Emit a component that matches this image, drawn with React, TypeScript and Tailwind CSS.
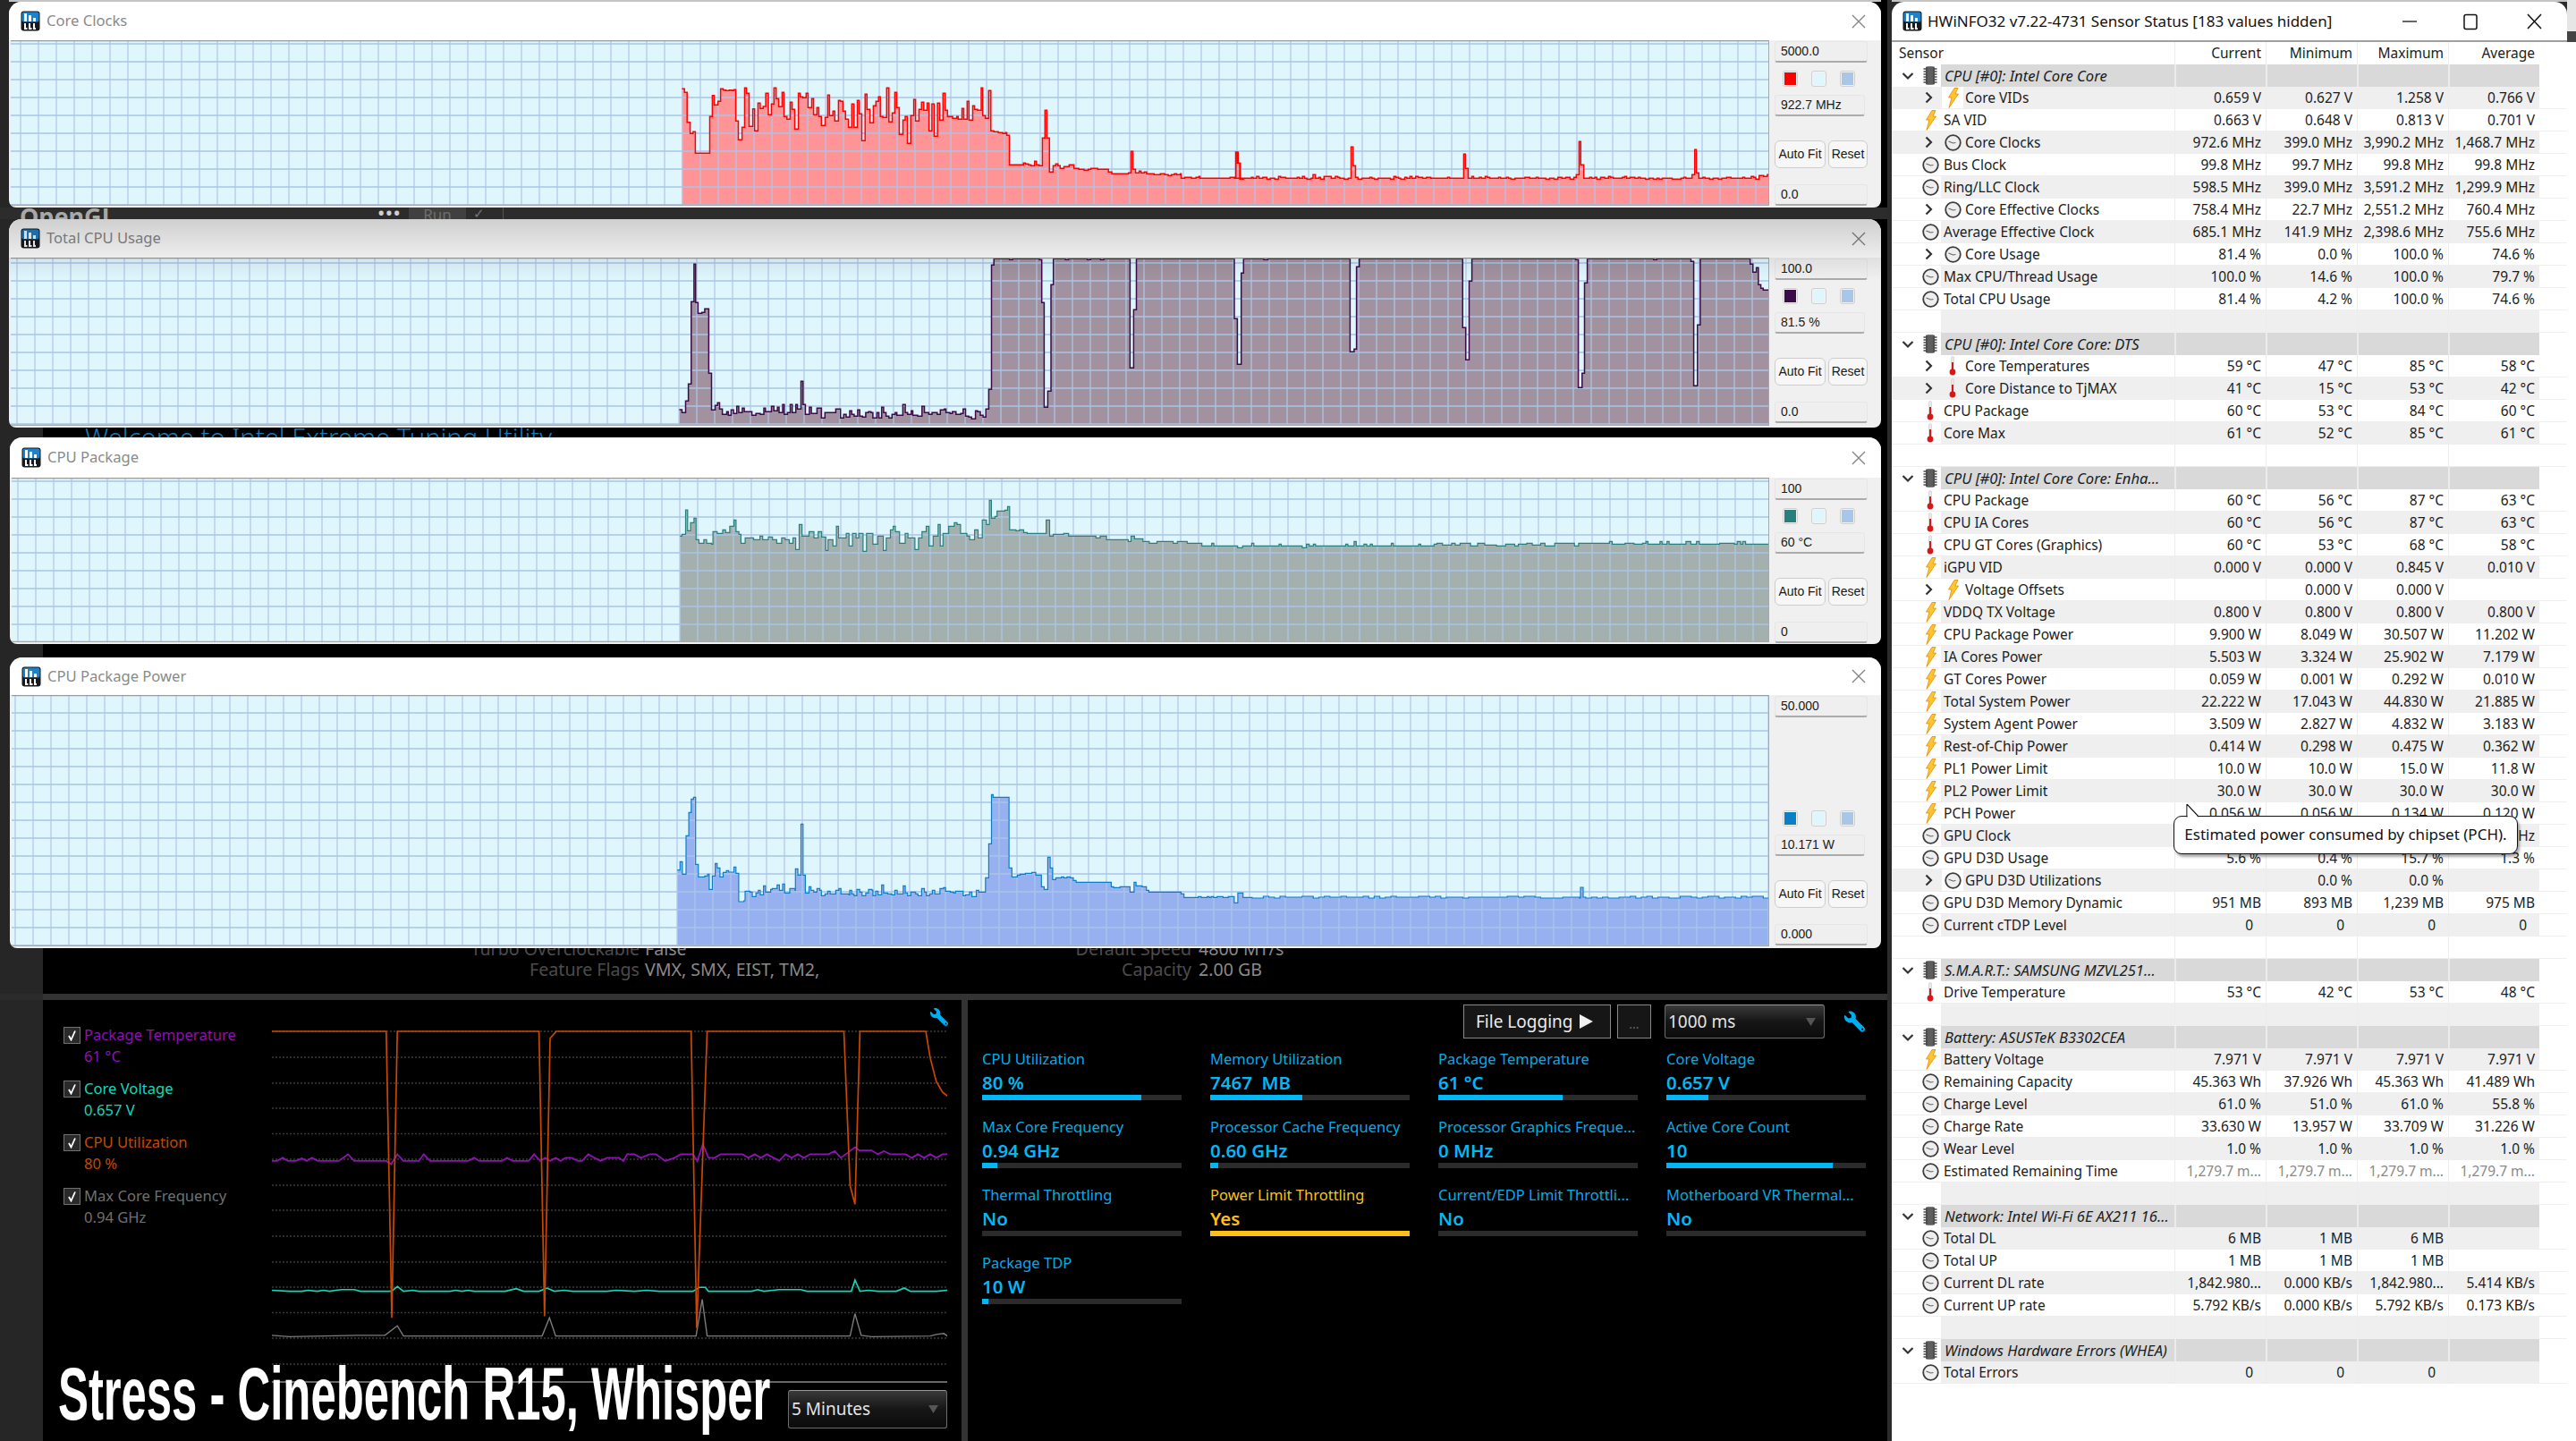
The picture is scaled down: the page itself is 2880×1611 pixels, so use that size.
import React from "react";
import { FaWrench } from "react-icons/fa";

type P = [number, number];
const conv = (raw: number[], x0: number, y0: number, sx: number, sy = 3): P[] => {
  const o: P[] = [];
  for (let i = 0; i < raw.length; i += 2) o.push([x0 + raw[i] / sx, y0 + raw[i + 1] / sy]);
  return o;
};
const stepD = (p: P[], right: number) => {
  let d = `M${p[0][0].toFixed(1)} ${p[0][1].toFixed(1)}`;
  for (let i = 1; i < p.length; i++) d += `H${p[i][0].toFixed(1)}V${p[i][1].toFixed(1)}`;
  return d + `H${right}`;
};
const noisy = (x0: number, x1: number, base: number, seed: number): P[] => {
  const o: P[] = [];
  let s = seed;
  for (let x = x0; x < x1; x += 6.2) {
    s = (s * 9301 + 49297) % 233280;
    const r = s / 233280;
    o.push([x, base + (r < 0.25 ? -1 : r > 0.8 ? 1 : 0)]);
  }
  return o;
};

const clk1 = conv([30,118,37,130,44,230,52,268,60,262,66,334,105,211,112,140,117,172,127,160,134,118,141,122,148,124,158,122,165,124,170,121,175,226,182,289,192,247,199,115,204,133,211,244,221,185,226,259,235,166,241,184,249,177,256,133,263,205,271,169,278,115,284,151,291,178,300,130,305,211,313,220,322,163,327,187,334,253,344,133,349,145,356,148,365,133,370,181,380,151,385,205,394,181,399,211,406,241,416,214,423,139,428,208,437,193,442,226,452,157,457,160,464,193,471,220,479,247,488,169,494,247,503,157,508,202,515,292,524,136,529,187,537,232,546,175,553,160,560,145,565,211,572,214,582,115,588,229,597,199,604,130,609,181,616,271,626,223,632,211,638,301,647,208,655,154,660,226,669,187,676,163,682,190,691,166,696,259,704,169,710,277,719,166,725,223,734,133,740,190,746,211,760,217,771,211,775,220,785,184,790,220,799,160,804,223,814,175,819,187,827,190,837,115,841,208,848,217,857,124,863,259,871,262,883,265,895,268,902,265,906,274,913,373,951,367,956,370,964,373,971,376,981,361,986,373,993,376,1002,283,1009,190,1014,283,1021,397,1031,376,1038,370,1044,376,1050,385,1060,379,1074,373,1087,385,1100,388,1114,391,1126,388,1133,385,1151,388,1180,397,1189,403,1234,400,1241,328,1246,388,1253,400,1263,394,1268,400,1277,397,1283,403,1303,406,1320,403,1332,406,1341,409,1350,406,1358,403,1364,406,1374,403,1376,418,1386,415,1404,418,1416,415,1424,412,1427,418,1508,415,1524,331,1530,367,1536,421,1545,418], 750, 60, 2.412);
const clk2 = conv([0,205,4,120,9,157,16,211,27,208,50,205,55,208,65,202,72,208,83,205,95,211,105,208,118,211,129,202,135,205,150,208,184,205,190,208,199,202,205,208,212,211,224,208,230,196,237,208,247,205,252,211,262,202,283,208,295,202,302,205,308,208,321,211,333,208,341,103,347,166,354,205,361,211,373,208,396,205,402,208,409,211,420,208,456,211,466,202,472,205,480,208,486,211,498,205,504,208,513,202,519,208,530,202,537,205,550,208,561,205,574,208,623,205,629,208,670,127,675,175,683,208,694,202,699,208,716,205,722,208,733,202,739,205,746,208,772,205,778,208,795,205,801,208,808,211,820,208,849,205,863,208,882,205,888,208,910,211,921,208,934,211,945,205,957,208,968,205,981,211,992,205,999,196,1007,85,1012,163,1021,208,1038,205,1044,208,1053,205,1059,211,1070,205,1082,208,1093,202,1099,205,1107,208,1133,205,1140,202,1146,208,1156,205,1170,208,1180,205,1186,208,1201,211,1212,208,1224,211,1235,208,1241,211,1250,208,1279,211,1305,208,1313,205,1319,208,1337,196,1345,112,1350,190,1357,208,1369,205,1375,208,1388,211,1399,208,1414,211,1424,208,1438,205,1451,208,1485,205,1491,208,1510,202,1517,205,1523,211,1533,199,1546,202,1557,196], 1380, 130, 2.613);
const usage1 = conv([133,594,140,604,149,565,156,508,163,232,170,106,174,235,180,271,190,268,197,256,207,472,214,595,223,580,229,571,234,592,241,610,252,601,256,613,263,595,269,607,277,583,282,604,291,589,296,601,306,601,315,613,325,607,336,610,345,589,349,601,364,583,370,598,379,586,383,604,392,577,396,610,404,604,411,577,416,604,425,577,429,592,438,499,443,577,449,610,459,586,464,607,478,589,489,622,498,604,525,592,537,622,545,610,551,619,560,598,565,610,571,616,580,595,585,616,592,619,600,604,607,601,613,604,618,622,628,604,633,622,640,586,645,604,651,616,658,622,666,610,674,604,678,613,693,577,699,604,705,610,714,598,718,613,730,616,741,583,747,604,758,610,766,604,779,610,787,595,797,592,801,604,811,607,817,601,826,610,838,607,844,592,850,616,858,619,865,625,875,598,880,601,887,613,894,619,901,592,908,526,915,109,921,88,960,91,968,88,1035,91,1041,235,1047,586,1056,532,1064,175,1070,88,1100,91,1108,88,1155,91,1163,88,1188,91,1196,88,1262,454,1271,259,1278,88], 700, 260, 2.24);
const usage2 = conv([0,229,9,382,20,76,27,28,86,31,98,28,338,340,350,331,357,55,365,28,667,259,676,367,686,103,694,28,997,31,1005,460,1016,412,1023,109,1031,28,1225,31,1234,28,1334,37,1342,454,1353,250,1361,28,1507,46,1515,73,1525,58,1531,115,1538,127,1545,133], 1380, 280, 2.613);
const pkg = conv([13,178,16,172,21,90,24,160,28,133,33,118,36,190,40,202,47,190,51,202,58,205,60,163,66,169,74,157,78,166,84,145,90,124,93,163,97,172,100,202,106,184,118,190,127,178,131,190,139,181,145,190,151,202,158,184,163,190,169,202,174,184,178,223,183,139,187,178,197,163,204,184,210,163,215,181,221,226,224,190,231,211,236,145,239,184,250,169,254,211,259,169,264,184,268,169,274,229,279,169,288,205,295,178,303,226,307,184,313,157,317,145,320,163,326,202,334,169,338,184,348,223,353,184,358,163,364,145,368,211,374,178,381,139,384,211,388,169,396,145,404,133,408,139,413,169,422,178,426,190,433,157,438,184,444,124,450,139,454,58,457,118,462,112,465,94,476,91,480,79,483,157,492,160,497,157,503,166,508,169,535,124,540,178,545,172,560,169,567,178,606,184,612,178,621,190,652,196,656,178,661,187,673,196,682,202,693,196,716,202,722,196,736,202,757,211,771,202,774,211,808,217,815,211,828,202,831,211,867,205,870,211,900,217,906,205,910,211,916,205,919,211,962,205,965,211,974,196,977,211,988,205,992,211,997,205,1000,211,1027,202,1030,211,1066,205,1069,211,1088,205,1092,202,1100,208,1113,202,1118,208,1125,202,1140,211,1150,202,1160,208,1177,211,1190,205,1203,211,1208,205,1220,202,1228,208,1240,202,1246,211,1260,202,1288,211,1294,202,1338,196,1342,205,1360,202,1373,205,1385,202,1390,196,1393,205,1410,196,1413,205,1420,196,1423,205,1447,196,1454,205,1462,196,1466,205,1495,202,1516,205,1520,196,1525,205,1528,196,1532,205], 750, 540, 1.275);
const power1 = conv([128,638,135,610,141,652,150,523,157,445,163,400,169,394,174,619,181,661,197,658,204,652,208,703,216,658,223,616,228,631,235,661,243,646,251,640,257,645,270,628,275,649,282,744,295,741,298,709,310,712,316,727,325,715,331,706,336,721,344,691,349,712,362,703,366,700,378,688,384,706,392,685,397,715,410,700,423,706,424,634,430,655,438,484,443,655,449,715,458,694,463,706,470,712,478,700,485,706,489,724,498,718,505,709,511,718,525,706,533,700,538,718,558,721,560,706,565,718,571,724,578,703,585,712,591,724,600,715,607,703,616,706,618,724,625,709,631,721,640,688,645,715,655,718,665,721,673,706,679,718,694,691,699,715,705,724,713,712,725,718,731,724,740,700,747,712,752,724,760,718,767,706,773,718,786,700,795,697,800,709,812,712,820,715,825,709,844,724,850,721,860,712,866,727,877,706,883,712,900,664,908,550,915,385,919,394,959,631,966,661,980,655,987,652,1000,649,1016,646,1026,655,1040,694,1047,703,1056,595,1062,631,1068,670,1076,664,1090,661,1096,664,1104,661,1112,664,1120,673,1127,679,1215,694,1221,697,1237,694,1262,712,1272,679,1277,691,1292,694,1303,706,1309,712,1390,718,1397,730,1433,727,1440,730,1455,727,1460,730,1465,727,1471,730,1480,727,1495,730,1508,727,1523,748,1532,715,1545,730], 700, 760, 2.24);
const power: P[] = [...power1, ...noisy(1400, 1766, 1003, 17), [1767, 992], [1770, 1003], ...noisy(1773, 1978, 1003, 91)];

const mapX = (a: number[]) => conv(a, 0, 1050, 1.452, 2.795);
const toLine = (p: P[]) => p.map((q) => `${q[0].toFixed(1)},${q[1].toFixed(1)}`).join(" ");
const orange = mapX([441,288,627,288,636,1183,645,288,875,288,884,1178,893,310,903,288,1122,288,1131,1215,1148,288,1370,288,1380,770,1388,828,1396,288,1503,288,1510,370,1520,445,1530,478,1538,490]);
const purple = mapX([441,693,450,693,459,683,467,693,480,693,490,685,498,693,506,683,516,693,550,693,565,672,575,693,627,693,635,703,645,672,655,693,680,693,688,672,698,693,760,693,770,683,778,693,815,693,823,683,832,693,858,693,867,672,877,693,885,683,893,693,902,683,910,693,918,683,928,683,938,693,945,693,955,672,965,683,975,693,985,683,1005,683,1012,693,1018,672,1030,672,1040,683,1055,672,1065,672,1080,693,1095,683,1105,672,1125,672,1132,693,1141,640,1150,683,1160,683,1170,672,1205,672,1215,683,1225,672,1235,683,1245,672,1265,693,1275,672,1285,683,1295,672,1305,683,1315,672,1345,672,1355,662,1365,683,1388,650,1395,660,1415,660,1425,672,1435,662,1445,672,1470,672,1480,683,1490,672,1500,683,1510,672,1520,683,1530,672,1538,672]);
const teal = mapX([441,1097,470,1100,490,1100,500,1097,515,1100,525,1097,535,1100,545,1097,555,1095,575,1095,585,1100,636,1100,645,1085,655,1100,670,1097,680,1100,730,1100,740,1097,750,1100,760,1097,770,1100,820,1100,838,1092,850,1100,875,1100,888,1090,900,1100,915,1097,930,1100,985,1100,1000,1097,1030,1100,1050,1097,1070,1100,1125,1100,1135,1088,1145,1088,1150,1100,1220,1100,1230,1095,1240,1100,1255,1097,1265,1095,1300,1095,1310,1100,1370,1100,1382,1100,1388,1065,1396,1100,1410,1097,1425,1100,1455,1100,1468,1090,1478,1100,1520,1100,1538,1097]);
const grayL = mapX([441,1238,470,1242,580,1238,625,1238,645,1208,655,1240,880,1240,892,1183,902,1240,1130,1240,1140,1125,1148,1240,1380,1240,1388,1170,1398,1238,1415,1242,1510,1240,1520,1235,1532,1232,1538,1240]);
const dotted = [1153,1182,1211,1239,1267.5,1296,1325,1353,1382,1411,1439,1467.5,1496,1525];

const AppIcon = () => (
  <svg width="22" height="23" viewBox="0 0 22 23" className="shrink-0">
    <rect x="0.5" y="0.5" width="21" height="22" rx="3" fill="#17191c" />
    <rect x="1.5" y="1.5" width="19" height="11" rx="2" fill="#1d82cb" />
    <rect x="4" y="3" width="3" height="9" fill="#fff" />
    <rect x="9" y="5" width="3" height="7" fill="#fff" />
    <rect x="14" y="8" width="3" height="4" fill="#fff" />
    <path d="M5 14v6h2.5M10 14v6h2.5M15 14v6h2" stroke="#fff" strokeWidth="2" fill="none" />
  </svg>
);
const Chip = () => (
  <svg width="16" height="21" viewBox="0 0 16 21">
    <rect x="3" y="0.5" width="10" height="20" rx="1" fill="#4d4d4d" />
    <rect x="5" y="0.5" width="6" height="20" fill="#5e5e5e" />
    {[2, 5, 8, 11, 14, 17].map((y) => (
      <g key={y}>
        <rect x="0.5" y={y} width="2.5" height="2" fill="#777" />
        <rect x="13" y={y} width="2.5" height="2" fill="#777" />
      </g>
    ))}
  </svg>
);
const Bolt = () => (
  <svg width="13" height="23" viewBox="0 0 13 23">
    <path d="M8 0.5L12 0.5L9 7L12.5 7L2 22.5L5 11L1.5 11Z" fill="#ffc531" stroke="#e48a00" strokeWidth="0.8" />
  </svg>
);
const Clock = () => (
  <svg width="19" height="19" viewBox="0 0 19 19">
    <circle cx="9.5" cy="9.5" r="8.3" fill="#eeeeee" stroke="#3d3d3d" strokeWidth="1.8" />
    <path d="M4.5 8L9.5 10L12.5 9.5" stroke="#666" strokeWidth="1.2" fill="none" />
  </svg>
);
const Thermo = () => (
  <svg width="8" height="22" viewBox="0 0 8 22">
    <rect x="2.5" y="0.5" width="3" height="16" rx="1.5" fill="#e8e8e8" stroke="#ccc" strokeWidth="0.6" />
    <rect x="3" y="7" width="2" height="10" fill="#d81818" />
    <circle cx="4" cy="18" r="3.4" fill="#d81818" />
  </svg>
);
const ChevDown = () => (
  <svg width="14" height="10" viewBox="0 0 14 10">
    <path d="M1.5 2L7 7.5L12.5 2" stroke="#333" strokeWidth="2.2" fill="none" />
  </svg>
);
const ChevRight = () => (
  <svg width="9" height="14" viewBox="0 0 9 14">
    <path d="M1.5 1.5L7 7L1.5 12.5" stroke="#333" strokeWidth="2.2" fill="none" />
  </svg>
);

type Ic = "b" | "c" | "t";
type Row =
  | { k: "e" }
  | { k: "g"; t: string }
  | { k: "r"; t: string; ic: Ic; d?: 1; v: string[]; dim?: boolean; w?: boolean };
const r = (t: string, ic: Ic, v: string[], d?: 1, w?: boolean): Row => ({ k: "r", t, ic, v, d, w });
const g = (t: string): Row => ({ k: "g", t });
const e: Row = { k: "e" };

const rows: Row[] = [
  g("CPU [#0]: Intel Core Core"),
  r("Core VIDs", "b", ["0.659 V", "0.627 V", "1.258 V", "0.766 V"], 1, true),
  r("SA VID", "b", ["0.663 V", "0.648 V", "0.813 V", "0.701 V"]),
  r("Core Clocks", "c", ["972.6 MHz", "399.0 MHz", "3,990.2 MHz", "1,468.7 MHz"], 1),
  r("Bus Clock", "c", ["99.8 MHz", "99.7 MHz", "99.8 MHz", "99.8 MHz"]),
  r("Ring/LLC Clock", "c", ["598.5 MHz", "399.0 MHz", "3,591.2 MHz", "1,299.9 MHz"]),
  r("Core Effective Clocks", "c", ["758.4 MHz", "22.7 MHz", "2,551.2 MHz", "760.4 MHz"], 1),
  r("Average Effective Clock", "c", ["685.1 MHz", "141.9 MHz", "2,398.6 MHz", "755.6 MHz"]),
  r("Core Usage", "c", ["81.4 %", "0.0 %", "100.0 %", "74.6 %"], 1),
  r("Max CPU/Thread Usage", "c", ["100.0 %", "14.6 %", "100.0 %", "79.7 %"]),
  r("Total CPU Usage", "c", ["81.4 %", "4.2 %", "100.0 %", "74.6 %"]),
  e,
  g("CPU [#0]: Intel Core Core: DTS"),
  r("Core Temperatures", "t", ["59 °C", "47 °C", "85 °C", "58 °C"], 1),
  r("Core Distance to TjMAX", "t", ["41 °C", "15 °C", "53 °C", "42 °C"], 1),
  r("CPU Package", "t", ["60 °C", "53 °C", "84 °C", "60 °C"]),
  r("Core Max", "t", ["61 °C", "52 °C", "85 °C", "61 °C"]),
  e,
  g("CPU [#0]: Intel Core Core: Enha..."),
  r("CPU Package", "t", ["60 °C", "56 °C", "87 °C", "63 °C"]),
  r("CPU IA Cores", "t", ["60 °C", "56 °C", "87 °C", "63 °C"]),
  r("CPU GT Cores (Graphics)", "t", ["60 °C", "53 °C", "68 °C", "58 °C"]),
  r("iGPU VID", "b", ["0.000 V", "0.000 V", "0.845 V", "0.010 V"]),
  r("Voltage Offsets", "b", ["", "0.000 V", "0.000 V", ""], 1),
  r("VDDQ TX Voltage", "b", ["0.800 V", "0.800 V", "0.800 V", "0.800 V"]),
  r("CPU Package Power", "b", ["9.900 W", "8.049 W", "30.507 W", "11.202 W"]),
  r("IA Cores Power", "b", ["5.503 W", "3.324 W", "25.902 W", "7.179 W"]),
  r("GT Cores Power", "b", ["0.059 W", "0.001 W", "0.292 W", "0.010 W"]),
  r("Total System Power", "b", ["22.222 W", "17.043 W", "44.830 W", "21.885 W"]),
  r("System Agent Power", "b", ["3.509 W", "2.827 W", "4.832 W", "3.183 W"]),
  r("Rest-of-Chip Power", "b", ["0.414 W", "0.298 W", "0.475 W", "0.362 W"]),
  r("PL1 Power Limit", "b", ["10.0 W", "10.0 W", "15.0 W", "11.8 W"]),
  r("PL2 Power Limit", "b", ["30.0 W", "30.0 W", "30.0 W", "30.0 W"]),
  r("PCH Power", "b", ["0.056 W", "0.056 W", "0.134 W", "0.120 W"]),
  r("GPU Clock", "c", ["99.8 MHz", "99.7 MHz", "99.8 MHz", "99.8 MHz"]),
  r("GPU D3D Usage", "c", ["5.6 %", "0.4 %", "15.7 %", "1.3 %"]),
  r("GPU D3D Utilizations", "c", ["", "0.0 %", "0.0 %", ""], 1, true),
  r("GPU D3D Memory Dynamic", "c", ["951 MB", "893 MB", "1,239 MB", "975 MB"]),
  r("Current cTDP Level", "c", ["0", "0", "0", "0"]),
  e,
  g("S.M.A.R.T.: SAMSUNG MZVL251..."),
  r("Drive Temperature", "t", ["53 °C", "42 °C", "53 °C", "48 °C"]),
  e,
  g("Battery: ASUSTeK B3302CEA"),
  r("Battery Voltage", "b", ["7.971 V", "7.971 V", "7.971 V", "7.971 V"]),
  r("Remaining Capacity", "c", ["45.363 Wh", "37.926 Wh", "45.363 Wh", "41.489 Wh"]),
  r("Charge Level", "c", ["61.0 %", "51.0 %", "61.0 %", "55.8 %"]),
  r("Charge Rate", "c", ["33.630 W", "13.957 W", "33.709 W", "31.226 W"]),
  r("Wear Level", "c", ["1.0 %", "1.0 %", "1.0 %", "1.0 %"]),
  { k: "r", t: "Estimated Remaining Time", ic: "c", v: ["1,279.7 m...", "1,279.7 m...", "1,279.7 m...", "1,279.7 m..."], dim: true },
  e,
  g("Network: Intel Wi-Fi 6E AX211 16..."),
  r("Total DL", "c", ["6 MB", "1 MB", "6 MB", ""]),
  r("Total UP", "c", ["1 MB", "1 MB", "1 MB", ""]),
  r("Current DL rate", "c", ["1,842.980...", "0.000 KB/s", "1,842.980...", "5.414 KB/s"]),
  r("Current UP rate", "c", ["5.792 KB/s", "0.000 KB/s", "5.792 KB/s", "0.173 KB/s"]),
  e,
  g("Windows Hardware Errors (WHEA)"),
  r("Total Errors", "c", ["0", "0", "0", ""]),
];

const icon = (i: Ic) => (i === "b" ? <Bolt /> : i === "c" ? <Clock /> : <Thermo />);

const SensorRow = ({ row, i }: { row: Row; i: number }) => {
  const striped = i < 12 ? i % 2 === 1 : i % 2 === 0;
  const bg = striped ? "bg-[#efefef]" : "bg-white";
  const line = "border-b border-[#efefef]";
  if (row.k === "g") {
    return (
      <div className="flex h-[25px]">
        <div className="w-[55px] flex items-center bg-white">
          <span className="w-[35px] flex justify-center"><ChevDown /></span>
          <span className="w-[16px] flex justify-center"><Chip /></span>
        </div>
        <div className="w-[261px] bg-[#d9d9d9] pl-[4px] italic text-[16.6px] leading-[25px] whitespace-nowrap overflow-hidden">{row.t}</div>
        {[0, 1, 2, 3].map((c) => <div key={c} className="w-[102px] bg-[#d9d9d9] border-l-2 border-[#ebebeb]" />)}
      </div>
    );
  }
  if (row.k === "e") {
    return (
      <div className={`flex h-[25px] ${line}`}>
        <div className="w-[55px] bg-white" />
        <div className={`w-[261px] ${bg}`} />
        {[0, 1, 2, 3].map((c) => <div key={c} className={`w-[102px] ${bg} border-l border-[#ececec]`} />)}
      </div>
    );
  }
  return (
    <div className={`flex h-[25px] ${line}`}>
      {row.d ? (
        <div className={`w-[316px] flex items-center ${bg}`}>
          <span className="w-[56px] pl-[37px] flex shrink-0 items-center"><ChevRight /></span>
          <span className={`w-[24px] h-[24px] flex shrink-0 items-center justify-center ${row.w ? "bg-white" : ""}`}>{icon(row.ic)}</span>
          <span className="pl-[2px] leading-[25px] whitespace-nowrap">{row.t}</span>
        </div>
      ) : (
        <>
          <div className="w-[55px] bg-white pl-[31px] flex items-center">
            <span className="w-[24px] flex justify-center">{icon(row.ic)}</span>
          </div>
          <div className={`w-[261px] pl-[3px] ${bg} leading-[25px] whitespace-nowrap`}>{row.t}</div>
        </>
      )}
      {row.v.map((v, c) => (
        <div
          key={c}
          className={`w-[102px] text-right leading-[25px] whitespace-nowrap border-l border-[#ececec] ${bg} ${v === "0" ? "pr-[14px]" : "pr-[5px]"} ${row.dim ? "text-[#8a8a8a]" : ""}`}
        >
          {v}
        </div>
      ))}
    </div>
  );
};

const Field = ({ children, w = "w-[103px]" }: { children: React.ReactNode; w?: string }) => (
  <div className={`${w} h-[24px] rounded-[3px] border border-[#e6e6e6] border-b-2 border-b-[#ababab] bg-[#efefef] pl-[6px] leading-[21px] text-[14px] text-[#1a1a1a] whitespace-nowrap font-['Liberation_Sans',sans-serif]`}>
    {children}
  </div>
);
const Swatch = ({ c }: { c: string }) => <div className="w-[17px] h-[18px] rounded-[3px] border border-[#cfcfcf] p-px bg-[#f4f4f4]"><div className="w-full h-full" style={{ background: c }} /></div>;

type GW = {
  pos: string; titleH: string; title: string; gx: number; gy: number; gw: number; gh: number; ox: number; oy: number;
  data: P[]; line: string; fill: string; top: string; val: string; bot: string; swGap?: string; shade?: boolean; lw?: number;
};
const GraphWindow = (w: GW) => {
  const xs: number[] = [];
  for (let x = w.ox; x < w.gx + w.gw; x += 20) if (x > w.gx) xs.push(x);
  const ys: number[] = [];
  for (let y = w.oy; y < w.gy + w.gh; y += 20) if (y > w.gy) ys.push(y);
  const right = w.gx + w.gw;
  const d = stepD(w.data, right);
  return (
    <div className={`absolute ${w.pos} bg-[#f0f0f0] rounded-t-[14px] rounded-b-[8px] overflow-hidden flex flex-col`}>
      <div className={`${w.titleH} shrink-0 bg-white flex items-center pl-[13px] pr-[17px]`}>
        <AppIcon />
        <span className="ml-[7px] text-[16.6px] text-[#8a8a8a]">{w.title}</span>
        <svg width="16" height="16" viewBox="0 0 16 16" className="ml-auto">
          <path d="M1 1L15 15M15 1L1 15" stroke="#858585" strokeWidth="1.4" />
        </svg>
      </div>
      <div className="flex flex-1 min-h-0">
        <svg width={w.gw} height={w.gh} viewBox={`${w.gx} ${w.gy} ${w.gw} ${w.gh}`} className="ml-[2px] shrink-0 block bg-[#dff6fd]">
          <path d={`${d}V${w.gy + w.gh}H${w.data[0][0]}Z`} fill={w.fill} />
          {xs.map((x) => <line key={x} x1={x} x2={x} y1={w.gy} y2={w.gy + w.gh} stroke="#aec8e9" strokeWidth="1.2" />)}
          {ys.map((y) => <line key={y} x1={w.gx} x2={right} y1={y} y2={y} stroke="#a9c4e8" strokeWidth="1.5" />)}
          <path d={d} fill="none" stroke={w.line} strokeWidth={w.lw ?? 1.5} />
          <line x1={w.gx} x2={right} y1={w.gy + 0.5} y2={w.gy + 0.5} stroke="#9c9c9c" strokeWidth="1.5" />
          <line x1={w.gx} x2={right} y1={w.gy + w.gh - 0.5} y2={w.gy + w.gh - 0.5} stroke="#a8a8a8" strokeWidth="1.5" />
          <line x1={right - 0.5} x2={right - 0.5} y1={w.gy} y2={w.gy + w.gh} stroke="#a8a8a8" strokeWidth="1" />
        </svg>
        <div className="ml-[6px] pt-[1px] flex flex-col">
          <Field w="w-[104px]">{w.top}</Field>
          <div className={`${w.swGap ?? "mt-[9px]"} h-[18px] flex gap-[15px] pl-[9px]`}>
            <Swatch c={w.line} />
            <Swatch c="#dff6fd" />
            <Swatch c="#a9c5e8" />
          </div>
          <div className="mt-[9px]"><Field w="w-[101px]">{w.val}</Field></div>
          <div className="mt-[27px] flex gap-[3px] text-[14px] text-[#1a1a1a] font-['Liberation_Sans',sans-serif]">
            <div className="w-[57px] h-[31px] rounded-[6px] border border-[#cdcdcd] bg-[#f7f7f7] text-center leading-[29px] whitespace-nowrap">Auto Fit</div>
            <div className="w-[44px] h-[31px] rounded-[6px] border border-[#cdcdcd] bg-[#f7f7f7] text-center leading-[29px]">Reset</div>
          </div>
          <div className="mt-[18px]"><Field w="w-[104px]">{w.bot}</Field></div>
        </div>
      </div>
      {w.shade && <div className="absolute top-0 left-0 right-0 h-[68px] bg-linear-to-b from-[#00000030] to-transparent pointer-events-none" />}
    </div>
  );
};

const metrics = [
  ["CPU Utilization", "80 %", 80],
  ["Memory Utilization", "7467  MB", 46],
  ["Package Temperature", "61 °C", 62.5],
  ["Core Voltage", "0.657 V", 21],
  ["Max Core Frequency", "0.94 GHz", 7.5],
  ["Processor Cache Frequency", "0.60 GHz", 4],
  ["Processor Graphics Freque...", "0 MHz", 0],
  ["Active Core Count", "10", 83.5],
  ["Thermal Throttling", "No", 0],
  ["Power Limit Throttling", "Yes", 100],
  ["Current/EDP Limit Throttli...", "No", 0],
  ["Motherboard VR Thermal...", "No", 0],
  ["Package TDP", "10 W", 3],
] as [string, string, number][];

const legend = [
  ["Package Temperature", "61 °C", "text-[#8d12b3]"],
  ["Core Voltage", "0.657 V", "text-[#12d8bd]"],
  ["CPU Utilization", "80 %", "text-[#c94800]"],
  ["Max Core Frequency", "0.94 GHz", "text-[#707070]"],
];

const DarkSelect = ({ w, label }: { w: string; label: string }) => (
  <div className={`${w} rounded-[3px] border border-[#6c6c6c] border-t-[#9a9a9a] bg-linear-to-b from-[#3a3a3a] via-[#161616] to-[#0c0c0c] flex items-center pl-[3px] pr-[9px] text-[19px] text-[#e4e4e4]`}>
    <span className="whitespace-pre">{label}</span>
    <svg width="11" height="9" viewBox="0 0 11 9" className="ml-auto"><path d="M0 0H11L5.5 9Z" fill="#555" /></svg>
  </div>
);

export default function App() {
  return (
    <div className="relative w-[2880px] h-[1611px] overflow-hidden bg-[#2b2b2b] flex font-['Noto_Sans',sans-serif]">
      <div className="w-[2110px] h-full flex flex-col shrink-0">
        <div className="h-[1111px] shrink-0 bg-black border-l-[48px] border-[#262626] flex flex-col">
          <div className="h-[232px] shrink-0" />
          <div className="h-[13px] shrink-0 -ml-[48px] bg-[#2c2c2c] overflow-hidden flex items-end pl-[22px] relative">
            <span className="text-[27px] font-bold text-[#a8a8a8] leading-[22px] -mb-[8px]">OpenGL</span>
            <span className="ml-[294px] text-[#cfcfcf] font-bold text-[18px] leading-[13px] tracking-[2px]">•••</span>
            <span className="ml-[8px] w-[64px] h-[13px] bg-[#404040] text-[#6e6e6e] text-[17px] leading-[16px] text-center">Run</span>
            <span className="ml-[8px] text-[#777] text-[15px] leading-[13px]">✓</span>
            <span className="ml-[20px] w-px h-[13px] bg-[#555]" />
          </div>
          <div className="h-[233px] shrink-0" />
          <div className="h-[11px] shrink-0 overflow-hidden pl-[47px]">
            <div className="text-[29.2px] font-light text-[#1e78b5] leading-[30px] -mt-[4px] whitespace-nowrap">Welcome to Intel Extreme Tuning Utility</div>
          </div>
          <div className="h-[560px] shrink-0" />
          <div className="h-[62px] shrink-0 overflow-hidden grid grid-cols-[667px_210px_407px_1fr] auto-rows-[23px] text-[19.6px] leading-[23px] whitespace-nowrap">
            <div className="text-right text-[#4c4c4c]">Turbo Overclockable</div>
            <div className="pl-[6px] text-[#8a8a8a]">False</div>
            <div className="text-right text-[#4c4c4c]">Default Speed</div>
            <div className="pl-[8px] text-[#8a8a8a]">4800 MT/s</div>
            <div className="text-right text-[#4c4c4c]">Feature Flags</div>
            <div className="pl-[6px] text-[#8a8a8a]">VMX, SMX, EIST, TM2,</div>
            <div className="text-right text-[#4c4c4c]">Capacity</div>
            <div className="pl-[8px] text-[#8a8a8a]">2.00 GB</div>
          </div>
        </div>
        <div className="h-[7px] shrink-0 bg-[#333] ml-[48px]" />
        <div className="flex-1 flex min-h-0 border-l-[48px] border-[#262626] bg-black">
          <div className="relative w-[1027px] flex shrink-0">
            <div className="w-[256px] pl-[23px] pt-[29px] shrink-0">
              {legend.map(([a, b, c], i) => (
                <div key={i} className="h-[60px]">
                  <div className="flex items-center h-[20px]">
                    <span className="w-[19px] h-[19px] border border-[#707070] bg-[#2a2a2a] flex items-center justify-center shrink-0">
                      <svg width="11" height="13" viewBox="0 0 11 13"><path d="M2 7L4.5 11.5L9 1.5" stroke="#fff" strokeWidth="1.8" fill="none" /></svg>
                    </span>
                    <span className={`ml-[4px] text-[16.6px] leading-[20px] whitespace-nowrap ${c}`}>{a}</span>
                  </div>
                  <div className={`pl-[23px] text-[16.6px] mt-[4px] leading-[20px] ${c}`}>{b}</div>
                </div>
              ))}
            </div>
            <div className="w-[755px] shrink-0 flex flex-col pt-[32px]">
              <svg width="755" height="400" viewBox="304 1150 755 400" className="block shrink-0">
                {dotted.map((y) => <line key={y} x1="304" x2="1059" y1={y} y2={y} stroke="#3a3a3a" strokeWidth="1.4" strokeDasharray="2 2" />)}
                <line x1="304" x2="1059" y1="1545" y2="1545" stroke="#8a8a8a" strokeWidth="1.5" />
                <polyline points={toLine(grayL)} fill="none" stroke="#7c7c7c" strokeWidth="1.4" />
                <polyline points={toLine(teal)} fill="none" stroke="#12d8bd" strokeWidth="1.6" />
                <polyline points={toLine(purple)} fill="none" stroke="#8d12b3" strokeWidth="1.8" />
                <polyline points={toLine(orange)} fill="none" stroke="#c94800" strokeWidth="1.7" />
              </svg>
              <div className="mt-[4px] flex justify-end">
                <DarkSelect w="w-[178px] h-[43px]" label="5 Minutes" />
              </div>
            </div>
            <FaWrench className="absolute left-[992px] top-[9px] w-[20px] h-[20px] text-[#00aeef] -scale-x-100" />
            <div className="absolute left-[17px] top-[390px] origin-left scale-x-[0.605] text-white font-bold text-[84px] leading-[100px] whitespace-nowrap font-['Liberation_Sans',sans-serif]">
              Stress - Cinebench R15, Whisper
            </div>
          </div>
          <div className="w-[7px] bg-[#333] shrink-0" />
          <div className="flex-1 flex flex-col">
            <div className="flex justify-end items-center h-[38px] mt-[5px] pr-[25px] shrink-0">
              <div className="w-[165px] h-[38px] border border-[#888] bg-[#161616] flex items-center pl-[13px] text-[#ececec] text-[19px]">
                File Logging
                <svg width="15" height="16" viewBox="0 0 15 16" className="ml-[8px]"><path d="M0 0L15 8L0 16Z" fill="#f0f0f0" /></svg>
              </div>
              <div className="ml-[7px] w-[38px] h-[38px] border border-[#888] bg-[#161616] text-[#666] text-[14px] text-center leading-[42px]">...</div>
              <div className="ml-[15px]"><DarkSelect w="w-[179px] h-[38px]" label="1000 ms" /></div>
              <FaWrench className="ml-[22px] w-[23px] h-[24px] text-[#00aeef] -scale-x-100" />
            </div>
            <div className="mt-[11px] pl-[16px] grid grid-cols-[repeat(4,223px)] gap-x-[32px]">
              {metrics.map(([a, b, p], i) => {
                const y = a === "Power Limit Throttling";
                return (
                  <div key={i} className="h-[76px]">
                    <div className={`h-[24px] leading-[24px] text-[16.5px] whitespace-nowrap overflow-hidden ${y ? "text-[#ffc015]" : "text-[#00aee8]"}`}>{a}</div>
                    <div className={`h-[28px] leading-[28px] text-[20.5px] font-semibold whitespace-pre ${y ? "text-[#ffc015]" : "text-[#00b8f5]"}`}>{b}</div>
                    <div className="h-[6px] bg-[#2b2b2b]">
                      <div className={`h-full ${y ? "bg-[#ffc015]" : "bg-[#00b8f5]"}`} style={{ width: `${p}%` }} />
                    </div>
                  </div>
                );
              })}
            </div>
          </div>
        </div>
      </div>

      <div className="absolute left-[2115px] top-[2px] w-[755px] h-[1609px] bg-white rounded-t-[14px] flex flex-col text-[15.5px] text-[#1c1c1c]">
        <div className="h-[45px] shrink-0 flex items-center pl-[12px] border-b-2 border-[#a0a0a0]">
          <AppIcon />
          <span className="ml-[6px] text-[17px] whitespace-nowrap text-[#111]">HWiNFO32 v7.22-4731 Sensor Status [183 values hidden]</span>
          <svg width="160" height="20" viewBox="0 0 160 20" className="ml-auto mr-[27px]">
            <path d="M3 10H19" stroke="#111" strokeWidth="1.3" />
            <rect x="72" y="2.5" width="14" height="16" rx="2" stroke="#111" strokeWidth="1.5" fill="none" />
            <path d="M143 2L158 18M158 2L143 18" stroke="#111" strokeWidth="1.5" />
          </svg>
        </div>
        <div className="flex h-[25px] shrink-0 leading-[25px]">
          <div className="w-[316px] pl-[8px]">Sensor</div>
          {["Current", "Minimum", "Maximum", "Average"].map((h) => (
            <div key={h} className="w-[102px] text-right pr-[5px] border-l border-[#ececec]">{h}</div>
          ))}
        </div>
        {rows.map((row, i) => <SensorRow key={i} row={row} i={i} />)}
        <div className="absolute left-[315px] top-[897px] w-[385px]">
          <svg width="30" height="16" viewBox="0 0 30 16" className="absolute left-[14px] top-0 z-10">
            <path d="M1 0L1 14.5M1 0L14 14" stroke="#111" strokeWidth="1.2" fill="none" />
            <path d="M1.6 2L1.6 16H14L13 14Z" fill="#fff" />
          </svg>
          <div className="mt-[13px] h-[43px] rounded-[9px] border border-[#111] bg-white text-[#111] text-[17px] text-center leading-[40px] shadow-[2px_3px_3px_rgba(0,0,0,0.35)] whitespace-nowrap">
            Estimated power consumed by chipset (PCH).
          </div>
        </div>
      </div>
      <div className="absolute left-[2870px] top-0 w-[10px] h-[1611px] flex flex-col">
        <div className="h-[35px] bg-[#e6e6e6]" />
        <div className="h-[12px] bg-[#444]" />
        <div className="flex-1 bg-white" />
      </div>
      <div className="absolute left-[10px] top-0 w-[2093px] h-[2px] bg-[#c4c4c4]" />
      <div className="absolute left-[2115px] top-0 w-[755px] h-[2px] bg-[#c4c4c4]" />

      <GraphWindow pos="left-[10px] top-[2px] w-[2093px] h-[230px]" titleH="h-[43px]" title="Core Clocks" gx={12} gy={45} gw={1966} gh={185} ox={3} oy={49} data={[...clk1, ...clk2]} line="#ff0000" fill="#ff9496" top="5000.0" val="922.7 MHz" bot="0.0" />
      <GraphWindow pos="left-[10px] top-[245px] w-[2093px] h-[233px]" titleH="h-[43px]" title="Total CPU Usage" gx={12} gy={288} gw={1966} gh={188} ox={-1} oy={294} data={[...usage1, ...usage2]} line="#3d0a4a" fill="#a2929f" top="100.0" val="81.5 %" bot="0.0" shade />
      <GraphWindow pos="left-[11px] top-[489px] w-[2092px] h-[231px]" titleH="h-[45px]" title="CPU Package" gx={13} gy={534} gw={1965} gh={184} ox={0} oy={538} data={pkg} line="#2a7f7c" fill="#a4b0ae" top="100" val="60 °C" bot="0" lw={1.2} />
      <GraphWindow pos="left-[11px] top-[735px] w-[2092px] h-[325px]" titleH="h-[42px]" title="CPU Package Power" gx={13} gy={777} gw={1965} gh={281} ox={-3} oy={797} data={power} line="#0a7fc8" fill="#97b1f0" top="50.000" val="10.171 W" bot="0.000" swGap="mt-[104px]" lw={1.2} />
    </div>
  );
}
